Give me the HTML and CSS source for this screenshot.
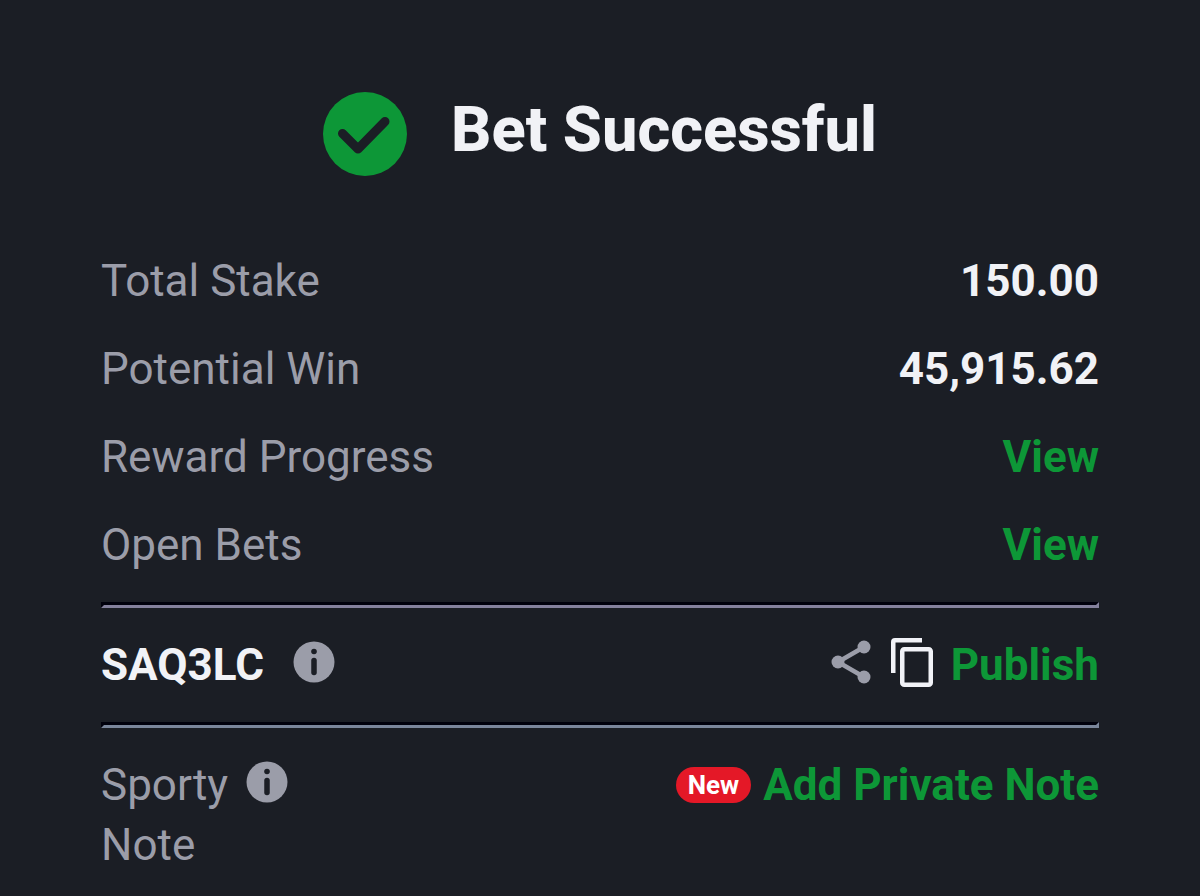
FILE: index.html
```html
<!DOCTYPE html>
<html lang="en">
<head>
<meta charset="utf-8">
<meta name="viewport" content="width=device-width, initial-scale=1">
<title>Bet Successful</title>
<link rel="stylesheet" href="styles.css">
</head>
<body>
<main class="receipt">
  <header class="header">
    <svg class="header-icon" viewBox="0 0 84 84" aria-hidden="true">
      <circle cx="42" cy="42" r="42" fill="#0d9737"/>
      <path d="M19.500 41.500L35 57L62 29.500" fill="none" stroke="#1b1e25" stroke-width="9" stroke-linecap="round" stroke-linejoin="round"/>
    </svg>
    <h1 class="title">Bet Successful</h1>
  </header>
  <dl class="summary">
    <div class="row"><dt class="label">Total Stake</dt><dd class="value">150.00</dd></div>
    <div class="row"><dt class="label">Potential Win</dt><dd class="value">45,915.62</dd></div>
    <div class="row"><dt class="label">Reward Progress</dt><dd class="value"><a class="action" href="#rewards">View</a></dd></div>
    <div class="row"><dt class="label">Open Bets</dt><dd class="value"><a class="action" href="#bets">View</a></dd></div>
  </dl>
  <hr class="rule">
  <section class="row">
    <div class="code">
      <span class="value">SAQ3LC</span>
      <button class="icon-button info" type="button" aria-label="About booking code">
        <svg class="info-icon" viewBox="0 0 42 42" aria-hidden="true">
          <circle cx="21" cy="21" r="20.500" fill="#9b9da9"/>
          <circle cx="21" cy="10.500" r="2.800" fill="#1b1e25"/>
          <path d="M21 19.500V31.500" stroke="#1b1e25" stroke-width="5.500" stroke-linecap="round"/>
        </svg>
      </button>
    </div>
    <div class="tools">
      <button class="icon-button" type="button" aria-label="Share">
        <svg class="share-icon" viewBox="0 0 40 44" aria-hidden="true">
          <path d="M33 7L7 22L33 37" fill="none" stroke="#9b9da9" stroke-width="4.500"/>
          <circle cx="33" cy="7" r="6.500" fill="#9b9da9"/>
          <circle cx="7" cy="22" r="6.500" fill="#9b9da9"/>
          <circle cx="33" cy="37" r="6.500" fill="#9b9da9"/>
        </svg>
      </button>
      <button class="icon-button copy" type="button" aria-label="Copy code">
        <svg class="copy-icon" viewBox="0 0 42 49" aria-hidden="true">
          <path d="M0 35V4Q0 0 4 0H31V4.500H4.500V35Z" fill="#f1f2f7"/>
          <rect x="11.250" y="11.250" width="28.500" height="35.500" rx="2" fill="none" stroke="#f1f2f7" stroke-width="4.500"/>
        </svg>
      </button>
      <button class="action publish" type="button">Publish</button>
    </div>
  </section>
  <hr class="rule rule-blue">
  <section class="row">
    <div class="note">
      <span class="label note-label">Sporty Note</span>
      <button class="icon-button info" type="button" aria-label="About Sporty Note">
        <svg class="info-icon" viewBox="0 0 42 42" aria-hidden="true">
          <circle cx="21" cy="21" r="20.500" fill="#9b9da9"/>
          <circle cx="21" cy="10.500" r="2.800" fill="#1b1e25"/>
          <path d="M21 19.500V31.500" stroke="#1b1e25" stroke-width="5.500" stroke-linecap="round"/>
        </svg>
      </button>
    </div>
    <div class="tools">
      <span class="badge">New</span>
      <button class="action add-note" type="button">Add Private Note</button>
    </div>
  </section>
</main>
</body>
</html>
```
FILE: styles.css
```css
* {
  box-sizing: border-box;
}

body {
  margin: 0;
  background: #1b1e25;
  color: #f1f2f6;
  font-family: Roboto, "Liberation Sans", sans-serif;
  font-size: 44px;
  line-height: 60px;
}

.receipt {
  padding: 92px 101px 20px;
}

.header {
  display: flex;
  justify-content: center;
  align-items: flex-start;
  gap: 44px;
  margin-bottom: 75px;
}

.header-icon {
  width: 84px;
  height: 84px;
}

.title {
  margin: 0;
  font-size: 63px;
  line-height: 76px;
  font-weight: 850;
}

.summary {
  display: flex;
  flex-direction: column;
  gap: 28px;
  margin: 0;
}

.row {
  display: flex;
  justify-content: space-between;
  align-items: flex-start;
}

.label {
  color: #9b9da9;
  font-weight: 400;
}

.value {
  margin: 0;
  font-weight: 700;
}

.action {
  padding: 0;
  border: 0;
  background: none;
  color: #0d9737;
  font: inherit;
  font-weight: 700;
  text-decoration: none;
  cursor: pointer;
}

.rule {
  margin: 27px 0;
  height: 6px;
  border: 3px solid;
  border-color: #00000c #84819d #84819d #00000c;
}

.rule-blue {
  border-color: #00000c #7a869b #7a869b #00000c;
}

.code,
.note,
.tools {
  display: flex;
  align-items: center;
}

.code {
  gap: 29px;
}

.note {
  align-items: flex-start;
  gap: 18px;
}

.note-label {
  width: min-content;
}

.icon-button {
  display: flex;
  padding: 0;
  border: 0;
  background: none;
  cursor: pointer;
}

.info {
  padding: 6px 0 12px;
}

.info-icon {
  width: 42px;
  height: 42px;
}

.share-icon {
  width: 40px;
  height: 44px;
}

.tools .icon-button {
  padding-bottom: 6px;
}

.copy {
  margin-left: 20px;
}

.copy-icon {
  width: 42px;
  height: 49px;
}

.publish {
  margin-left: 18px;
}

.badge {
  padding: 0 12px;
  border-radius: 18px;
  background: #e41827;
  color: #ffffff;
  font-size: 26px;
  line-height: 36px;
  font-weight: 700;
}

.add-note {
  margin-left: 12px;
}
```
